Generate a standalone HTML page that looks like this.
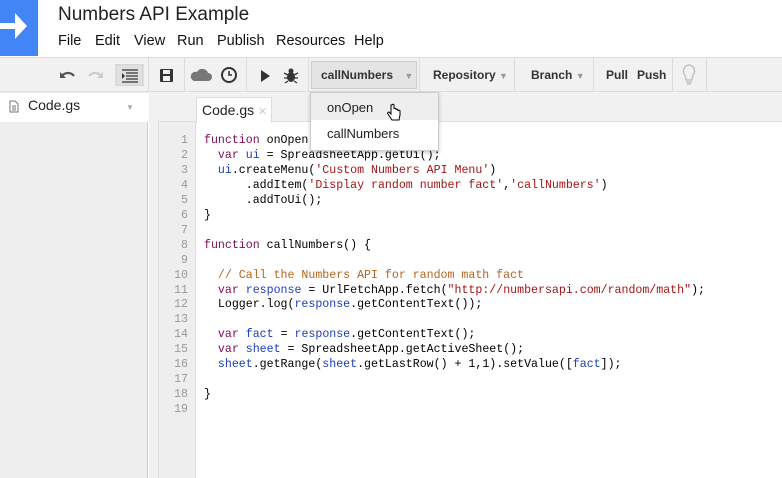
<!DOCTYPE html>
<html><head><style>
*{margin:0;padding:0;box-sizing:border-box}
body{width:782px;height:478px;overflow:hidden;background:#fff;font-family:"Liberation Sans",Arial,sans-serif;position:relative;color:#222}
.a{position:absolute}
.logo{left:0;top:0;width:38px;height:56px;background:#4285f4}
.title{left:58px;top:4px;font-size:19px;color:#222}
.menu{top:33px;font-size:14.5px;color:#111}
.tb{left:0;top:57px;width:782px;height:35px;background:#f1f1f1;border-top:1px solid #ddd;border-bottom:1px solid #ddd}
.sep{top:57px;width:1px;height:35px;background:#dcdcdc}
.btn{font-size:12px;font-weight:bold;color:#333;top:68px}
.side{left:0;top:92px;width:148px;height:386px;background:#eee;border-right:1px solid #ccc}
.sidefile{left:0;top:93px;width:148px;height:29px;background:#fff}
.tabbar{left:149px;top:92px;width:633px;height:30px;background:#f1f1f1;border-bottom:1px solid #ddd}
.gutter{left:158px;top:122px;width:38px;height:356px;background:#eee;border-right:1px solid #ddd;border-left:1px solid #ddd}
.gap{left:149px;top:92px;width:9px;height:386px;background:#f1f1f1}
pre{font-family:"Liberation Mono",monospace;font-size:11.6px;line-height:14.95px}
.ln{left:158px;top:134px;width:30px;text-align:right;color:#999}
.code{left:204px;top:134px;color:#000}
.k{color:#7f0b55}.v{color:#1a3fbf}.s{color:#a31515}.c{color:#b5651d}
.dd{left:310px;top:92px;width:129px;height:59px;background:#fff;border:1px solid #ccc;box-shadow:0 2px 4px rgba(0,0,0,.2)}
</style></head><body>
<div class="a logo"><svg width="38" height="56"><path d="M0 23h15v-10l12 13-12 13v-10H0z" fill="#fff"/></svg></div>
<div class="a title">Numbers API Example</div>
<div class="a menu" style="left:58px">File</div>
<div class="a menu" style="left:95px">Edit</div>
<div class="a menu" style="left:134px">View</div>
<div class="a menu" style="left:177px">Run</div>
<div class="a menu" style="left:217px">Publish</div>
<div class="a menu" style="left:276px">Resources</div>
<div class="a menu" style="left:354px">Help</div>
<div class="a tb"></div>
<svg class="a" style="left:58px;top:64px" width="300" height="22">
<path d="M4 12c3-4 9-4 12 0" stroke="#555" stroke-width="2.2" fill="none"/><path d="M2 8v6h6z" fill="#555"/>
<path d="M43 12c-3-4-9-4-12 0" stroke="#ccc" stroke-width="2.2" fill="none"/><path d="M45 8v6h-6z" fill="#ccc"/>
<rect x="58" y="0" width="27" height="22" fill="#e0e0e0" stroke="#ccc"/>
<path d="M64 6h16M68 9h12M68 12h12M68 15h12M64 18h16" stroke="#333" stroke-width="1.3"/><path d="M64 9l3 3-3 3z" fill="#333"/>
<rect x="102" y="5" width="13" height="13" rx="1" fill="#333"/><rect x="105" y="6" width="7" height="4" fill="#f1f1f1"/><rect x="105" y="12" width="7" height="5" fill="#f1f1f1"/>
<path d="M136 17h14a4 4 0 0 0 0-8 6 6 0 0 0-11-1 4.5 4.5 0 0 0-3 9z" fill="#777"/>
<circle cx="171" cy="11" r="7" stroke="#333" stroke-width="2" fill="none"/><path d="M171 7v4h3" stroke="#333" stroke-width="1.6" fill="none"/>
<path d="M203 6l9 6-9 6z" fill="#333"/>
<ellipse cx="233" cy="13" rx="4" ry="5" fill="#333"/><circle cx="233" cy="7" r="2.5" fill="#333"/><path d="M226 9l4 2M240 9l-4 2M226 14h4M240 14h-4M227 19l3-2M239 19l-3-2" stroke="#333" stroke-width="1.3"/>
</svg>
<div class="a sep" style="left:148px"></div><div class="a sep" style="left:184px"></div><div class="a sep" style="left:246px"></div><div class="a sep" style="left:308px"></div>
<div class="a" style="left:311px;top:61px;width:106px;height:28px;background:#e4e4e4;border:1px solid #ccc"></div>
<div class="a btn" style="left:321px">callNumbers <span style="color:#999;font-size:9px;margin-left:8px">▼</span></div>
<div class="a sep" style="left:419px"></div>
<div class="a btn" style="left:433px">Repository <span style="color:#999;font-size:9px">▼</span></div>
<div class="a sep" style="left:514px"></div>
<div class="a btn" style="left:531px">Branch <span style="color:#999;font-size:9px">▼</span></div>
<div class="a sep" style="left:593px"></div>
<div class="a btn" style="left:606px">Pull</div><div class="a btn" style="left:637px">Push</div>
<div class="a sep" style="left:672px"></div>
<svg class="a" style="left:679px;top:63px" width="20" height="24"><path d="M10 2a6 6 0 0 0-4 10l1 5h6l1-5a6 6 0 0 0-4-10z" stroke="#bbb" stroke-width="1.3" fill="none"/><path d="M7 19h6M8 21h4" stroke="#bbb" stroke-width="1.3"/></svg>
<div class="a sep" style="left:706px"></div>
<div class="a side"></div>
<div class="a sidefile"></div>
<svg class="a" style="left:9px;top:100px" width="10" height="13"><path d="M1 1h5l3 3v8H1z" fill="#fff" stroke="#777"/><path d="M3 6h4M3 8h4M3 10h4" stroke="#777"/></svg>
<div class="a" style="left:28px;top:97px;font-size:14px">Code.gs</div>
<div class="a" style="left:126px;top:103px;font-size:8px;color:#aaa">▼</div>
<div class="a tabbar"></div>
<div class="a gap"></div>
<div class="a" style="left:196px;top:97px;width:76px;height:26px;background:#fff;border:1px solid #ddd;border-bottom:none"></div>
<div class="a" style="left:202px;top:102px;font-size:14px">Code.gs <span style="color:#ccc;font-size:11px">✕</span></div>
<div class="a gutter"></div>
<pre class="a ln">1
2
3
4
5
6
7
8
9
10
11
12
13
14
15
16
17
18
19</pre>
<pre class="a code"><span class="k">function</span> onOpen() {
  <span class="k">var</span> <span class="v">ui</span> = SpreadsheetApp.getUi();
  <span class="v">ui</span>.createMenu(<span class="s">'Custom Numbers API Menu'</span>)
      .addItem(<span class="s">'Display random number fact'</span>,<span class="s">'callNumbers'</span>)
      .addToUi();
}

<span class="k">function</span> callNumbers() {

  <span class="c">// Call the Numbers API for random math fact</span>
  <span class="k">var</span> <span class="v">response</span> = UrlFetchApp.fetch(<span class="s">"http://numbersapi.com/random/math"</span>);
  Logger.log(<span class="v">response</span>.getContentText());

  <span class="k">var</span> <span class="v">fact</span> = <span class="v">response</span>.getContentText();
  <span class="k">var</span> <span class="v">sheet</span> = SpreadsheetApp.getActiveSheet();
  <span class="v">sheet</span>.getRange(<span class="v">sheet</span>.getLastRow() + 1,1).setValue([<span class="v">fact</span>]);

}
</pre>
<div class="a dd"></div>
<div class="a" style="left:311px;top:93px;width:127px;height:27px;background:#eee"></div>
<div class="a" style="left:327px;top:100px;font-size:13px">onOpen</div>
<div class="a" style="left:327px;top:126px;font-size:13px">callNumbers</div>
<svg class="a" style="left:386px;top:103px" width="16" height="20"><path d="M5 2v9l-2-2c-1 0-2 1-1 2l4 6h7l1-5V8c0-1-2-1-2 0V7c0-1-2-1-2 0V6c0-1-2-1-2 0V2c0-1-2-1-2 0z" fill="#fff" stroke="#000" stroke-width="1"/></svg>
</body></html>
